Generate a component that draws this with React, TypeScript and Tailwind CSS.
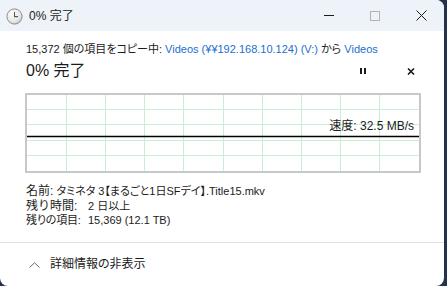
import React from "react";

const font = { fontFamily: '"Liberation Sans", "Noto Sans CJK JP", sans-serif' };

function ClockIcon() {
  return (
    <svg width="17" height="17" viewBox="0 0 17 17" aria-hidden="true">
      <defs>
        <radialGradient id="cg" cx="40%" cy="35%" r="70%">
          <stop offset="0%" stopColor="#ffffff" />
          <stop offset="70%" stopColor="#e6e6e6" />
          <stop offset="100%" stopColor="#bdbdbd" />
        </radialGradient>
      </defs>
      <circle cx="8.5" cy="8.5" r="7.6" fill="url(#cg)" stroke="#8c8c8c" strokeWidth="1" />
      <path d="M8.5 4.2V8.6H11.6" fill="none" stroke="#5a5a5a" strokeWidth="1.1" strokeLinecap="round" />
    </svg>
  );
}

function Chart() {
  const cols = Array.from({ length: 9 }, (_, i) => (391 / 10) * (i + 1));
  const rows = Array.from({ length: 4 }, (_, i) => (76 / 5) * (i + 1));
  return (
    <div className="relative ml-[25px] mt-[10px] h-[80px] w-[396px] border-2 border-[#c8c8c8]">
      <svg width="392" height="76" className="block">
        {cols.map((x) => (
          <line key={x} x1={Math.round(x) + 0.5} x2={Math.round(x) + 0.5} y1="0" y2="76" stroke="#c8efd4" strokeWidth="1" />
        ))}
        {rows.map((y) => (
          <line key={y} x1="0" x2="392" y1={Math.round(y) - 0.5} y2={Math.round(y) - 0.5} stroke="#c8efd4" strokeWidth="1" />
        ))}
        <line x1="0" x2="392" y1="41.5" y2="41.5" stroke="#000" strokeWidth="1.6" />
      </svg>
      <div className="absolute right-[5px] top-[24px] text-[12px] leading-[14px] text-[#1b1b1b]">
        速度: 32.5 MB/s
      </div>
    </div>
  );
}

export default function App() {
  return (
    <div className="h-[286px] w-[447px] overflow-hidden bg-[#26324d] [font-feature-settings:'palt']" style={font}>
      <div className="flex h-[286px] w-[444px] flex-col overflow-hidden rounded-b-[8px] rounded-tr-[8px] bg-white">
        <header className="flex h-[31px] shrink-0 items-center bg-[#eef3f9]">
          <div className="ml-[6px] mt-[1px]">
            <ClockIcon />
          </div>
          <span className="ml-[6px] text-[12px] text-[#1b1b1b]">0% 完了</span>
          <div className="ml-auto flex h-full">
            <div className="flex w-[46px] items-center justify-center">
              <span className="block h-px w-[10px] bg-[#1b1b1b]" />
            </div>
            <div className="flex w-[46px] items-center justify-center">
              <span className="block size-[10px] border border-[#b4b4b4]" />
            </div>
            <div className="flex w-[46px] items-center justify-center">
              <svg width="11" height="11" viewBox="0 0 11 11">
                <path d="M0.5 0.5L10.5 10.5M10.5 0.5L0.5 10.5" stroke="#1b1b1b" strokeWidth="1" />
              </svg>
            </div>
          </div>
        </header>

        <main className="flex-1 text-[#1b1b1b]">
          <p className="ml-[26px] mt-[10px] text-[11px] leading-[16px]">
            15,372 個の項目をコピー中: <span className="text-[#1a6fcf]">Videos (¥¥192.168.10.124) (V:)</span> から{" "}
            <span className="text-[#1a6fcf]">Videos</span>
          </p>
          <div className="mt-[2px] flex h-[24px] items-center">
            <span className="ml-[26px] text-[16px] leading-[20px]">0% 完了</span>
            <div className="ml-auto mr-[29px] flex items-center gap-[41px]">
              <span className="flex gap-[2px]">
                <span className="block h-[6px] w-[2px] bg-[#1b1b1b]" />
                <span className="block h-[6px] w-[2px] bg-[#1b1b1b]" />
              </span>
              <svg width="8" height="7" viewBox="0 0 8 7">
                <path d="M1 0.5L7 6.5M7 0.5L1 6.5" stroke="#1b1b1b" strokeWidth="1.6" />
              </svg>
            </div>
          </div>

          <Chart />

          <div className="ml-[26px] mt-[11px] text-[11px] leading-[14.5px]">
            <p>
              <span className="text-[12px] [font-feature-settings:normal]">名前:</span> タミネタ 3【まるごと1日SFデイ】.Title15.mkv
            </p>
            <p className="flex">
              <span className="w-[62px] shrink-0 whitespace-nowrap text-[12px] [font-feature-settings:normal]">残り時間:</span>
              <span>2 日以上</span>
            </p>
            <p className="flex">
              <span className="w-[62px] shrink-0 whitespace-nowrap text-[11px] tracking-[-0.2px]">残りの項目:</span>
              <span>15,369 (12.1 TB)</span>
            </p>
          </div>
        </main>

        <footer className="h-[44px] shrink-0 border-t border-[#e0e0e0]">
          <div className="flex h-[42px] items-center">
            <svg className="ml-[29px] mt-[1px]" width="11" height="6" viewBox="0 0 11 6">
              <path d="M0.5 5.5L5.5 0.8L10.5 5.5" fill="none" stroke="#6a6a6a" strokeWidth="1" />
            </svg>
            <span className="ml-[10px] text-[12px] text-[#1b1b1b]">詳細情報の非表示</span>
          </div>
        </footer>
      </div>
    </div>
  );
}
